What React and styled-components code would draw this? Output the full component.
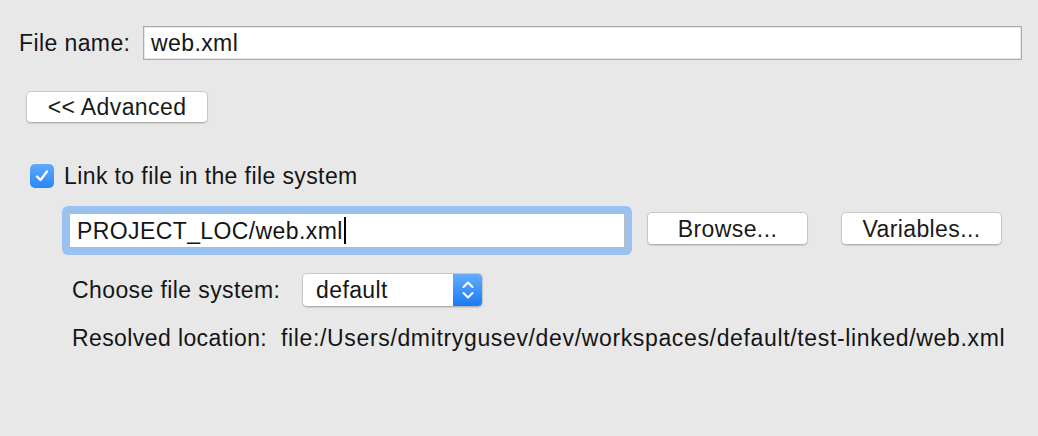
import React from 'react';
import styled, { createGlobalStyle } from 'styled-components';

const GlobalStyle = createGlobalStyle`
  html, body {
    margin: 0;
    background: #e8e8e8;
  }
  body {
    font-family: "Liberation Sans", Arial, sans-serif;
    font-size: 23px;
    line-height: 26px;
    letter-spacing: 0.4px;
    color: #151515;
  }
`;

const Page = styled.div`
  display: flex;
  flex-direction: column;
  align-items: flex-start;
  padding: 26px 16px 0 19px;
  height: 436px;
  box-sizing: border-box;
`;

const Row = styled.div`
  display: flex;
  align-items: ${(p) => p.align || 'center'};
  margin-top: ${(p) => p.top || 0}px;
  margin-left: ${(p) => p.left || 0}px;
  align-self: ${(p) => (p.stretch ? 'stretch' : 'auto')};
`;

const Label = styled.span`
  display: inline-block;
  width: ${(p) => p.width}px;
  flex-shrink: 0;
  white-space: nowrap;
`;

const PathText = styled.span`
  white-space: nowrap;
  letter-spacing: 0.65px;
`;

const TextField = styled.div`
  flex: 1;
  height: 34px;
  box-sizing: border-box;
  display: flex;
  align-items: center;
  padding: 0 7px;
  background: #fff;
  border: 1px solid #ababab;
  box-shadow: inset 0 0 0 1px #e6e6e6;
  white-space: nowrap;
`;

const FocusRing = styled.div`
  width: 570px;
  height: 49px;
  box-sizing: border-box;
  padding: 7px;
  border-radius: 6px;
  background: #99c2f0;
  display: flex;
`;

const FocusedField = styled.div`
  flex: 1;
  display: flex;
  align-items: center;
  padding: 0 7px;
  background: #fff;
  border: 1px solid #b9b9b9;
  white-space: nowrap;
`;

const Caret = styled.span`
  display: inline-block;
  width: 2px;
  height: 27px;
  margin-left: 1px;
  background: #000;
`;

const PushButton = styled.button`
  width: ${(p) => p.width || 161}px;
  height: ${(p) => p.height || 33}px;
  margin: ${(p) => p.margin || 0};
  padding: 0;
  background: #fff;
  border: 1px solid #c8c8c8;
  border-bottom-color: #b4b4b4;
  border-radius: 5px;
  box-shadow: 0 1px 1px rgba(0, 0, 0, 0.12);
  font: inherit;
  letter-spacing: inherit;
  color: #1a1a1a;
  cursor: default;
`;

const CheckBox = styled.span`
  width: 24px;
  height: 24px;
  border-radius: 5px;
  background: linear-gradient(#5fa9fc, #2a86f8);
  display: flex;
  align-items: center;
  justify-content: center;
  margin-right: 10px;
  flex-shrink: 0;
`;

const Select = styled.div`
  width: 181px;
  height: 34px;
  box-sizing: border-box;
  display: flex;
  border-radius: 5px;
  background: #fff;
  border: 1px solid #c8c8c8;
  border-bottom-color: #b4b4b4;
  box-shadow: 0 1px 1px rgba(0, 0, 0, 0.12);
  overflow: hidden;
`;

const SelectValue = styled.span`
  flex: 1;
  display: flex;
  align-items: center;
  padding-left: 13px;
`;

const Stepper = styled.span`
  width: 29px;
  background: linear-gradient(#64acfc, #1b7bf7);
  display: flex;
  align-items: center;
  justify-content: center;
`;

const Indented = styled.div`
  display: flex;
  flex-direction: column;
  margin-left: 43px;
`;

export default function App() {
  return (
    <>
      <GlobalStyle />
      <Page>
        <Row stretch>
          <Label width={124}>File name:</Label>
          <TextField>web.xml</TextField>
        </Row>

        <PushButton width={182} height={32} margin="31px 0 0 7px">
          &lt;&lt; Advanced
        </PushButton>

        <Row top={40} left={11}>
          <CheckBox>
            <svg width="16" height="16" viewBox="0 0 16 16">
              <path d="M3 8.5 L6.5 12 L13 3.5" fill="none" stroke="#fff" strokeWidth="2.4" strokeLinecap="round" strokeLinejoin="round" />
            </svg>
          </CheckBox>
          <span>Link to file in the file system</span>
        </Row>

        <Indented>
          <Row top={17} align="flex-start">
            <FocusRing>
              <FocusedField>
                PROJECT_LOC/web.xml<Caret />
              </FocusedField>
            </FocusRing>
            <PushButton margin="6px 0 0 15px">Browse...</PushButton>
            <PushButton margin="6px 0 0 33px">Variables...</PushButton>
          </Row>

          <Row top={18} left={10}>
            <Label width={230}>Choose file system:</Label>
            <Select>
              <SelectValue>default</SelectValue>
              <Stepper>
                <svg width="14" height="24" viewBox="0 0 14 24">
                  <path d="M2.5 9 L7 4.5 L11.5 9 M2.5 15 L7 19.5 L11.5 15" fill="none" stroke="#fff" strokeWidth="2" strokeLinecap="round" strokeLinejoin="round" />
                </svg>
              </Stepper>
            </Select>
          </Row>

          <Row top={18} left={10}>
            <Label width={209}>Resolved location:</Label>
            <PathText>file:/Users/dmitrygusev/dev/workspaces/default/test-linked/web.xml</PathText>
          </Row>
        </Indented>
      </Page>
    </>
  );
}
